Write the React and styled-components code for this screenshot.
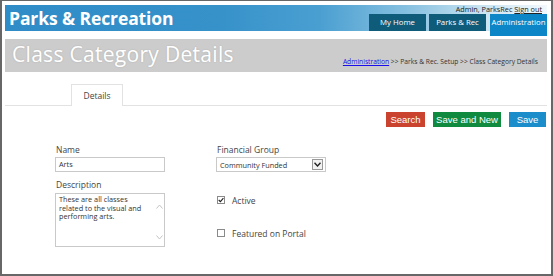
import React from "react";
import styled, { createGlobalStyle } from "styled-components";

const Global = createGlobalStyle`
  html, body { margin: 0; padding: 0; background: #fff; }
  body { font-family: "Open Sans", "Noto Sans", sans-serif; }
  * { box-sizing: border-box; }
`;

const Frame = styled.div`
  width: 553px;
  height: 276px;
  border-style: solid;
  border-color: #676767;
  border-width: 1px 2px 2px 2px;
  padding: 4px 4px 0 3px;
  background: #fff;
  overflow: hidden;
`;

const Header = styled.div`
  height: 26px;
  display: flex;
  justify-content: space-between;
  background: linear-gradient(to right, #2f8cc7 0%, #3792ca 40%, #4a9fd1 58%, #86c0e0 74%, #c9e3f1 88%, #f2f8fc 100%);
`;

const Brand = styled.div`
  font-weight: 700;
  font-size: 17.5px;
  color: #fff;
  line-height: 26px;
  padding-left: 4px;
  letter-spacing: -0.1px;
`;

const RightCol = styled.div`
  display: flex;
  flex-direction: column;
  align-items: flex-end;
`;

const UserLine = styled.div`
  font-size: 7.3px;
  line-height: 9px;
  color: #222;
  padding-right: 5px;
  height: 9px;
  & a { color: #222; text-decoration: underline; }
`;

const Tabs = styled.div`
  display: flex;
  gap: 3px;
  align-items: flex-start;
`;

const NavTab = styled.div`
  width: 57px;
  height: ${(p) => (p.$active ? "22px" : "17px")};
  background: ${(p) => (p.$active ? "#0c86c6" : "#0f5b7a")};
  color: #fff;
  font-size: 7.8px;
  line-height: 17px;
  text-align: center;
  margin-left: ${(p) => (p.$gap ? "1px" : "0")};
`;

const TitleBar = styled.div`
  margin-top: 8px;
  height: 33px;
  background: #cccccc;
  display: flex;
  justify-content: space-between;
  align-items: flex-end;
  padding: 0 9px 4px 7px;
`;

const PageTitle = styled.div`
  font-size: 21px;
  line-height: 28px;
  color: #fff;
  font-weight: 400;
  text-shadow: 0 0 2px rgba(0, 0, 0, 0.15);
  letter-spacing: 0.3px;
`;

const Crumbs = styled.div`
  font-size: 6.7px;
  color: #333;
  line-height: 10px;
  padding-bottom: 1px;
  & a { color: #1a0dee; text-decoration: underline; }
`;

const TabStrip = styled.div`
  margin-top: 12px;
  height: 22px;
  border-bottom: 1px solid #e2e2e2;
  padding-left: 66px;
  display: flex;
  align-items: flex-end;
`;

const FormTab = styled.div`
  width: 52px;
  height: 22px;
  border: 1px solid #e2e2e2;
  border-bottom: none;
  background: #fff;
  margin-bottom: -1px;
  font-size: 8.5px;
  color: #444;
  text-align: center;
  line-height: 21px;
`;

const Toolbar = styled.div`
  margin-top: 6px;
  display: flex;
  justify-content: flex-end;
  gap: 8px;
  padding-right: 1px;
`;

const Button = styled.div`
  height: 15px;
  width: ${(p) => p.$w}px;
  background: ${(p) => p.$bg};
  color: #fff;
  font-family: "Liberation Sans", Arial, sans-serif;
  font-size: 9.5px;
  line-height: 15px;
  text-align: center;
`;

const Form = styled.div`
  margin-top: 17px;
  margin-left: 50px;
  display: grid;
  grid-template-columns: 110px 110px;
  column-gap: 51px;
`;

const Col = styled.div`
  display: flex;
  flex-direction: column;
`;

const Label = styled.div`
  font-size: 8.5px;
  line-height: 12px;
  height: 12px;
  color: #444;
  margin-top: ${(p) => p.$mt || 0}px;
  margin-bottom: ${(p) => p.$mb || 1}px;
  padding-left: 1px;
`;

const Input = styled.div`
  height: 15px;
  border: 1px solid #c9c9c9;
  font-size: 7.3px;
  line-height: 13px;
  padding-left: 3px;
  color: #333;
`;

const TextBox = styled.div`
  height: 54px;
  border: 1px solid #c9c9c9;
  display: flex;
`;

const TextBody = styled.div`
  flex: 1;
  font-size: 7.3px;
  line-height: 8.5px;
  color: #333;
  padding: 1px 3px;
`;

const Scroll = styled.div`
  width: 10px;
  display: flex;
  flex-direction: column;
  justify-content: space-between;
  align-items: center;
  padding: 10px 0 6px;
`;

const Select = styled.div`
  height: 15px;
  border: 1px solid #c9c9c9;
  display: flex;
  align-items: center;
  justify-content: space-between;
  padding: 0 2px 0 3px;
  font-size: 7.3px;
  color: #333;
`;

const DropBtn = styled.div`
  width: 11px;
  height: 11px;
  border: 1px solid #999;
  background: #f2f2f2;
  display: flex;
  align-items: center;
  justify-content: center;
`;

const CheckRow = styled.div`
  display: flex;
  align-items: center;
  gap: 7px;
  height: 12px;
  margin-top: ${(p) => p.$mt}px;
  font-size: 8.5px;
  color: #444;
`;

const Box = styled.div`
  width: 8px;
  height: 8px;
  border: 1px solid #8a8a8a;
  background: #fff;
  display: flex;
  align-items: center;
  justify-content: center;
  margin-left: 1px;
`;

const Chevron = ({ up }) => (
  <svg width="7" height="5" viewBox="0 0 7 5">
    <path d={up ? "M0.5 4.5 L3.5 1 L6.5 4.5" : "M0.5 0.5 L3.5 4 L6.5 0.5"} fill="none" stroke="#c4c4c4" strokeWidth="1" />
  </svg>
);

export default function App() {
  return (
    <>
      <Global />
      <Frame>
        <Header>
          <Brand>Parks &amp; Recreation</Brand>
          <RightCol>
            <UserLine>
              Admin, ParksRec <a>Sign out</a>
            </UserLine>
            <Tabs>
              <NavTab>My Home</NavTab>
              <NavTab>Parks &amp; Rec</NavTab>
              <NavTab $active $gap>Administration</NavTab>
            </Tabs>
          </RightCol>
        </Header>
        <TitleBar>
          <PageTitle>Class Category Details</PageTitle>
          <Crumbs>
            <a>Administration</a> &gt;&gt; Parks &amp; Rec. Setup &gt;&gt; Class Category Details
          </Crumbs>
        </TitleBar>
        <TabStrip>
          <FormTab>Details</FormTab>
        </TabStrip>
        <Toolbar>
          <Button $w={39} $bg="#c9432f">Search</Button>
          <Button $w={68} $bg="#0f8a3f">Save and New</Button>
          <Button $w={37} $bg="#1b8dcb">Save</Button>
        </Toolbar>
        <Form>
          <Col>
            <Label>Name</Label>
            <Input>Arts</Input>
            <Label $mt={7} $mb={2}>Description</Label>
            <TextBox>
              <TextBody>
                These are all classes related to the visual and performing arts.
              </TextBody>
              <Scroll>
                <Chevron up />
                <Chevron />
              </Scroll>
            </TextBox>
          </Col>
          <Col>
            <Label>Financial Group</Label>
            <Select>
              <span>Community Funded</span>
              <DropBtn>
                <svg width="7" height="5" viewBox="0 0 7 5">
                  <path d="M0.5 0.8 L3.5 4 L6.5 0.8" fill="none" stroke="#222" strokeWidth="1.4" />
                </svg>
              </DropBtn>
            </Select>
            <CheckRow $mt={22}>
              <Box>
                <svg width="7" height="6" viewBox="0 0 7 6">
                  <path d="M0.8 3 L2.8 5 L6.3 0.8" fill="none" stroke="#222" strokeWidth="1.3" />
                </svg>
              </Box>
              Active
            </CheckRow>
            <CheckRow $mt={21}>
              <Box />
              Featured on Portal
            </CheckRow>
          </Col>
        </Form>
      </Frame>
    </>
  );
}
